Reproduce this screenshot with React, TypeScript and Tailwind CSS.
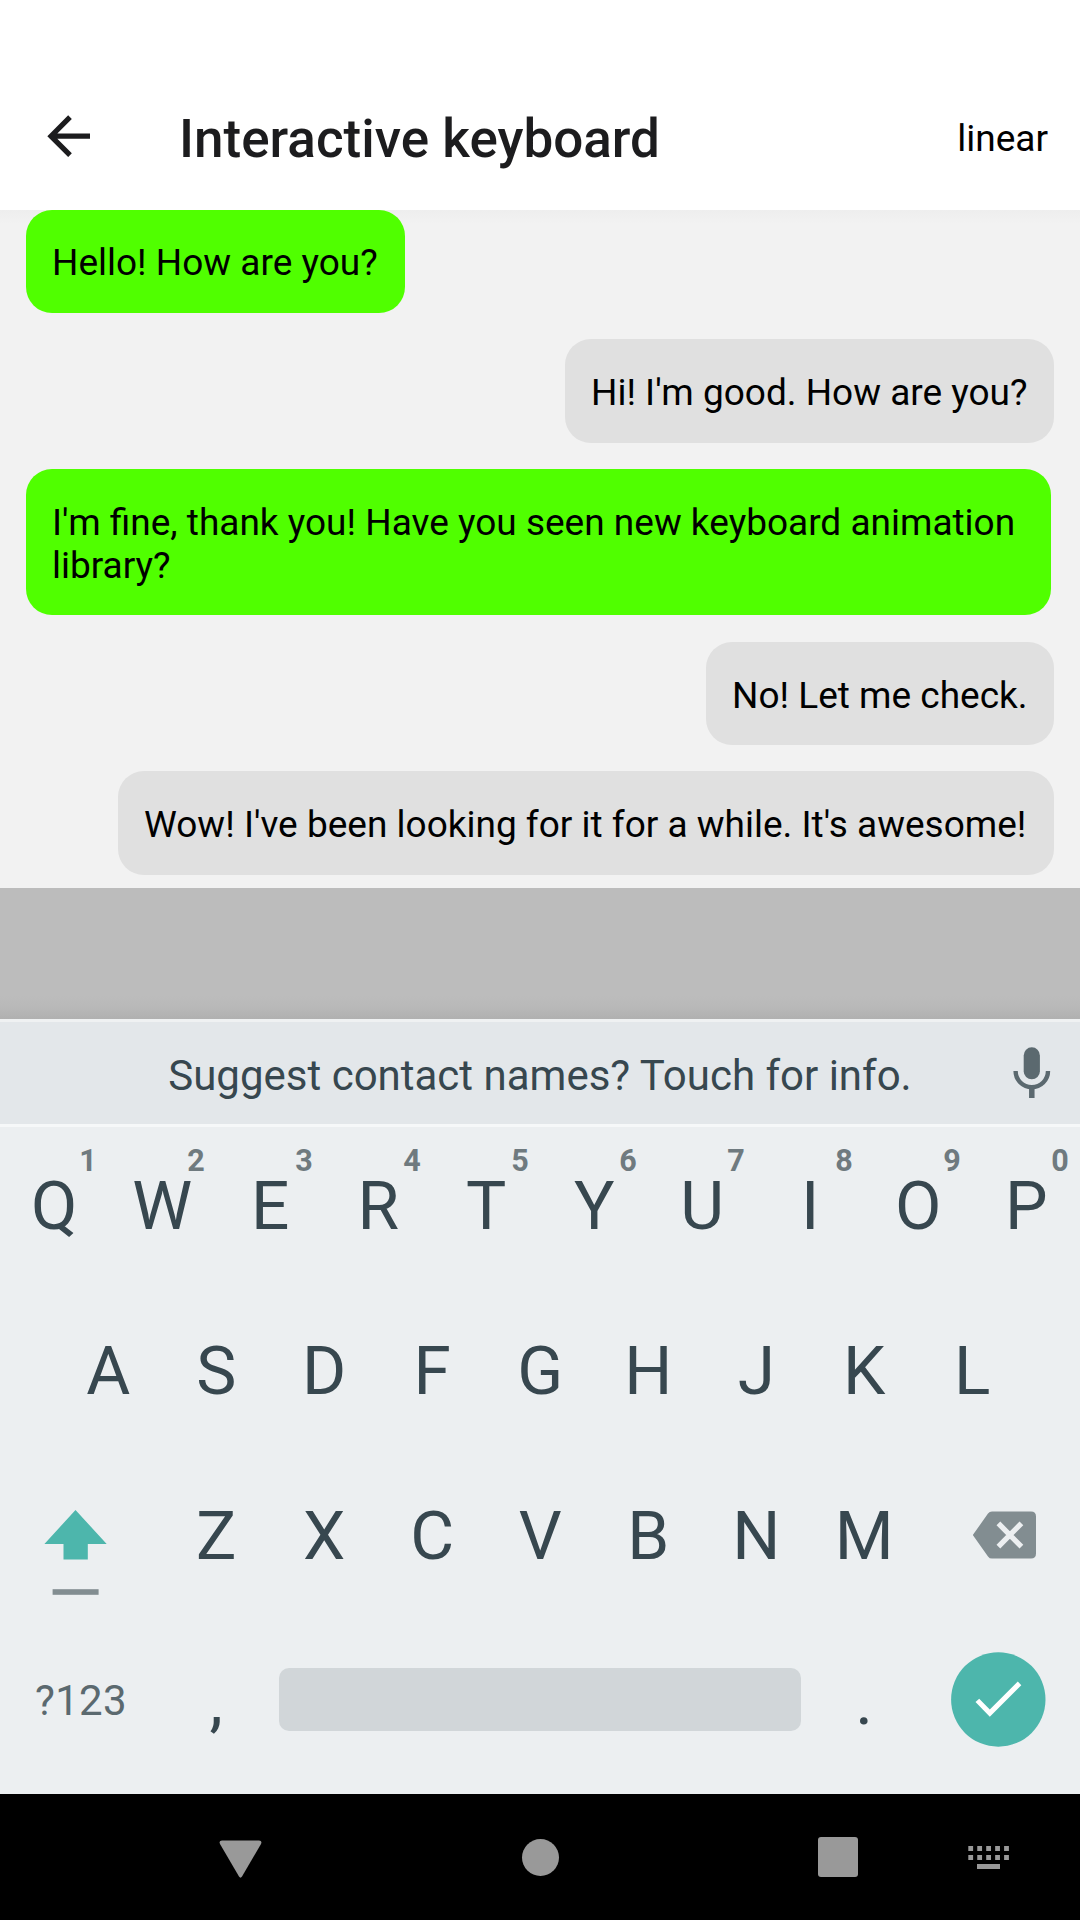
import React from "react";

type Message = { text: string; box: string; own?: boolean };

const messages: Message[] = [
  { text: "Hello! How are you?", box: "h-[103px] w-[379px] pt-[31px]" },
  { text: "Hi! I'm good. How are you?", box: "h-[104px] w-[489px] pt-8", own: true },
  {
    text: "I'm fine, thank you! Have you seen new keyboard animation library?",
    box: "h-[146px] w-[1025px] pt-8",
  },
  { text: "No! Let me check.", box: "mt-px h-[103px] w-[348px] pt-8", own: true },
  {
    text: "Wow! I've been looking for it for a while. It's awesome!",
    box: "h-[104px] w-[936px] pt-8",
    own: true,
  },
];

function Bubble({ text, box, own }: Message) {
  return (
    <div
      className={`${box} ${
        own ? "self-end bg-[#e0e0e0]" : "self-start bg-[#50ff00]"
      } shrink-0 rounded-[26px] pl-[26px] text-[37px] leading-[43px] text-black`}
    >
      {text}
    </div>
  );
}

function Letter({ char, hint }: { char: string; hint?: string }) {
  return (
    <div className="relative flex h-full w-[108px] items-center justify-center pl-[0.5px] text-[67.5px] leading-none">
      {char}
      {hint && (
        <span className="absolute top-[19px] left-[68px] w-10 text-center text-[30.5px] leading-[30px] font-bold text-[#6f7a7f]">
          {hint}
        </span>
      )}
    </div>
  );
}

function Row({ children }: { children: React.ReactNode }) {
  return <div className="flex h-[158px] shrink-0 items-center justify-center">{children}</div>;
}

export default function App() {
  return (
    <div className="flex h-[1920px] w-[1080px] flex-col overflow-hidden bg-white font-['Roboto',sans-serif]">
      <header className="flex h-[210px] shrink-0 items-center bg-white pt-[67px] pr-[32px] pl-[47px]">
        <svg className="mb-[5px] h-[42px] w-[44px]" viewBox="0 0 44 42" fill="none" stroke="#1c1c1e" strokeWidth="5.2">
          <path d="M43 21.2H4.2M23 2.2L4 21.2L23 40.2" />
        </svg>
        <h1 className="ml-[88px] text-[53px] leading-[62px] font-medium text-[#1c1c1e]">
          Interactive keyboard
        </h1>
        <span className="ml-auto text-[37px] leading-[43px] text-black">linear</span>
      </header>

      <main className="flex h-[678px] shrink-0 flex-col gap-[26px] bg-[linear-gradient(#eeeeee,#f2f2f2_14px)] px-[26px]">
        {messages.map((m) => (
          <Bubble key={m.text} {...m} />
        ))}
      </main>

      <div className="h-[131px] shrink-0 bg-[linear-gradient(#bcbcbc_108px,#b8b8b8_120px,#b0b0b0)]" />

      <div className="relative flex h-[108px] shrink-0 items-center border-t-[3px] border-b-[3px] border-t-[#eff1f2] border-b-[#f6f8f9] bg-[#e3e7ea]">
        <div className="flex-1 pt-[5px] text-center text-[42px] leading-[49px] text-[#37474f]">
          Suggest contact names? Touch for info.
        </div>
        <svg className="absolute top-[25px] left-[1013px] h-[52px] w-[38px]" viewBox="0 0 38 52">
          <rect x="10.7" y="0.3" width="16.2" height="32" rx="8.1" fill="#5b696f" />
          <path d="M2.6 24a16.2 16.2 0 0 0 32.4 0" fill="none" stroke="#5b696f" strokeWidth="4.4" />
          <path d="M18.8 40v11" stroke="#5b696f" strokeWidth="5.5" />
        </svg>
      </div>

      <section className="flex h-[667px] shrink-0 flex-col gap-[7px] bg-[#eceff1] text-[#37474f]">
        <Row>
          {"QWERTYUIOP".split("").map((c, i) => (
            <Letter key={c} char={c} hint={String((i + 1) % 10)} />
          ))}
        </Row>
        <Row>
          {"ASDFGHJKL".split("").map((c) => (
            <Letter key={c} char={c} />
          ))}
        </Row>
        <Row>
          <div className="flex w-[162px] pl-11">
            <svg className="mt-[34px] h-[86px] w-[63px]" viewBox="0 0 63 86">
              <path d="M31.5 0L62.7 34H43.8V49.5H19.5V34H0.4Z" fill="#4db6ac" />
              <rect x="8.6" y="79.2" width="46" height="5.6" fill="#828d91" />
            </svg>
          </div>
          {"ZXCVBNM".split("").map((c) => (
            <Letter key={c} char={c} />
          ))}
          <div className="flex w-[162px] pb-[3px] pl-[54px]">
            <svg className="h-[48px] w-[65px]" viewBox="0 0 65 48">
              <path
                d="M0.8 24L16 2.6Q17.5 0.4 20 0.4H59Q64 0.4 64 5.4V42.6Q64 47.6 59 47.6H20Q17.5 47.6 16 45.4Z"
                fill="#828d91"
              />
              <path d="M26.4 12.4L49.4 35.6M49.4 12.4L26.4 35.6" stroke="#eceff1" strokeWidth="5.3" />
            </svg>
          </div>
        </Row>
        <Row>
          <div className="w-[162px] pb-[2px] text-center text-[42px] leading-[49px] tracking-[0.35px] text-[#5b696f]">?123</div>
          <Letter char="," />
          <div className="flex w-[540px] justify-center pb-[3px]">
            <div className="h-[63px] w-[522px] rounded-[10px] bg-[#d1d6d9]" />
          </div>
          <Letter char="." />
          <div className="flex w-[162px] justify-center pr-[2px] pb-[3px]">
            <svg className="h-[95px] w-[95px]" viewBox="0 0 95 95">
              <circle cx="47.3" cy="47.5" r="47.2" fill="#4db6ac" />
              <path d="M24.5 50L28.2 46.8L38.8 57.4L66.8 29.6L70.3 33.3L38.8 64.8Z" fill="#fff" />
            </svg>
          </div>
        </Row>
      </section>

      <nav className="flex h-[126px] shrink-0 items-center bg-black pl-[219px]">
        <svg className="mt-[4px] h-[38px] w-[43px]" viewBox="0 0 43 38" fill="#999">
          <path d="M3 0.5H40Q43.5 0.5 42 4L23 36.5Q21.5 38.8 20 36.5L1 4Q-0.5 0.5 3 0.5Z" />
        </svg>
        <div className="mt-px ml-[260px] size-[37px] rounded-full bg-[#999]" />
        <div className="ml-[259px] size-[40px] rounded-[3px] bg-[#999]" />
        <svg className="mt-[2px] ml-[110px] h-[24px] w-[42px]" viewBox="0 0 42 24" fill="#999">
          {[0, 1, 2, 3, 4].map((i) => (
            <React.Fragment key={i}>
              <rect x={0.3 + i * 8.95} y="0" width="4.8" height="5" />
              <rect x={0.3 + i * 8.95} y="9" width="4.8" height="5" />
            </React.Fragment>
          ))}
          <rect x="9" y="18" width="23" height="5" />
        </svg>
      </nav>
    </div>
  );
}
